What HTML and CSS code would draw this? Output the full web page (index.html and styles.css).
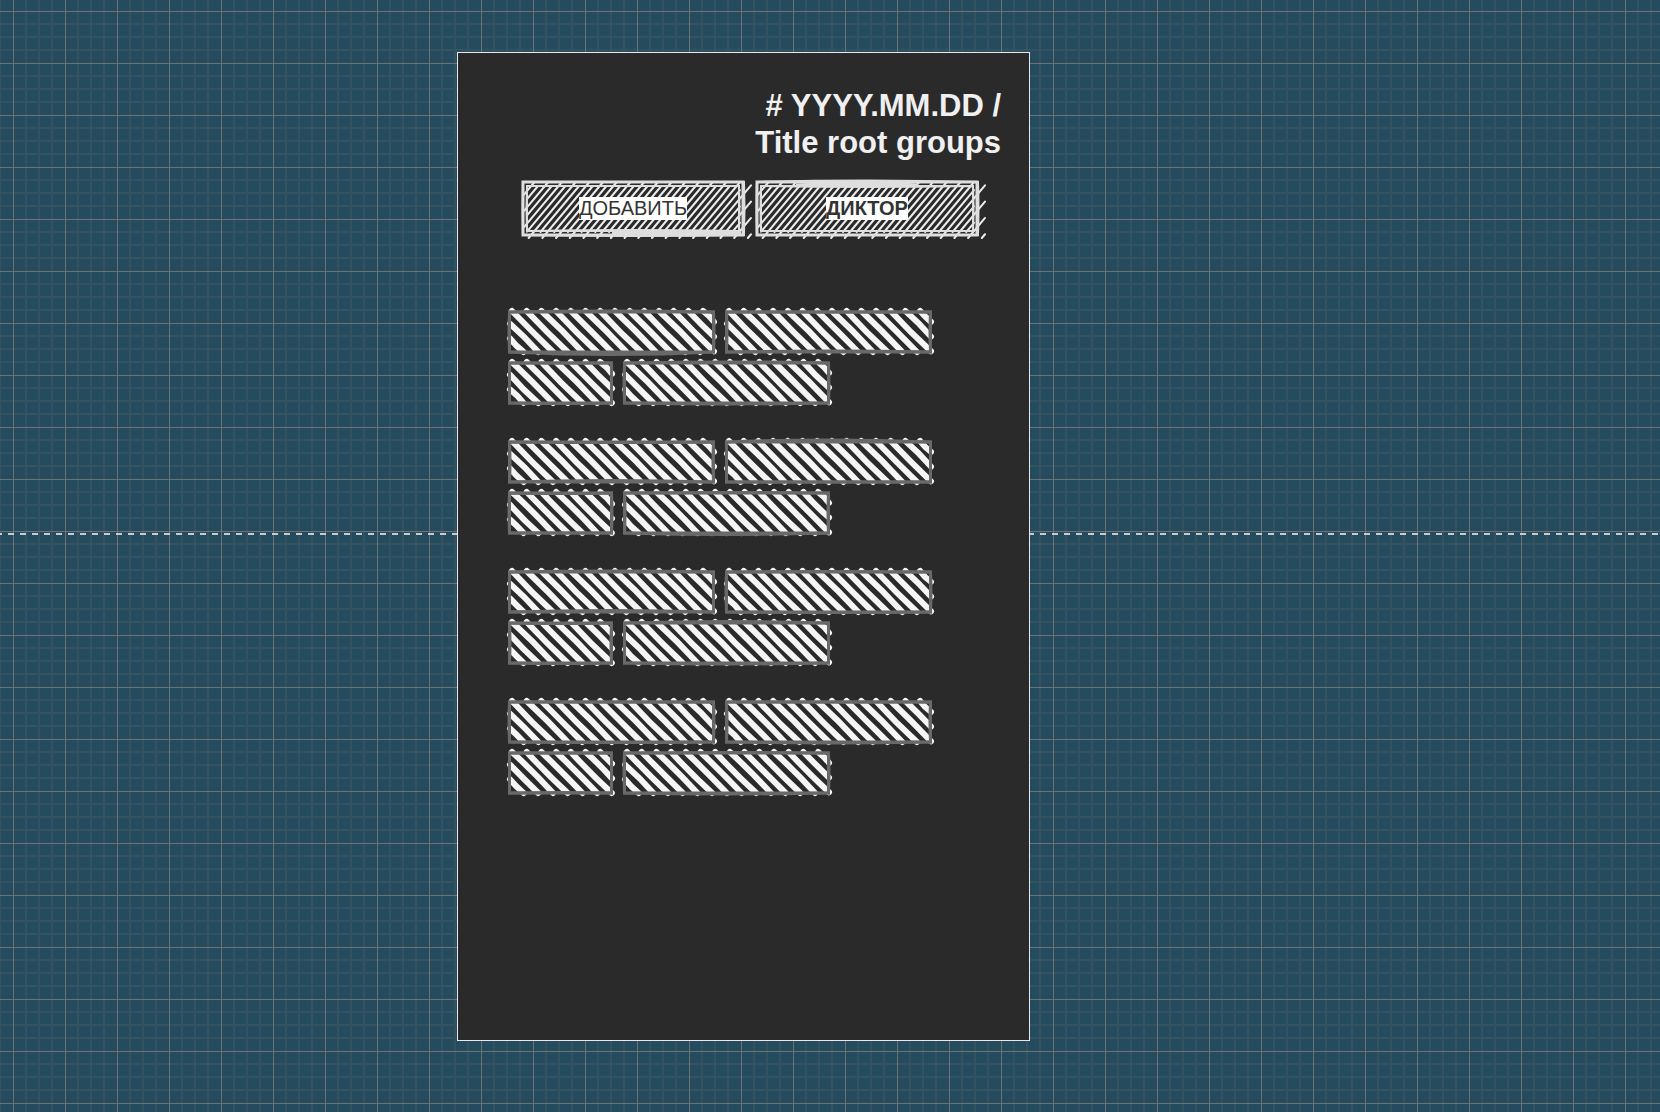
FILE: index.html
```html
<!DOCTYPE html>
<html lang="ru">
<head>
<meta charset="utf-8">
<meta name="viewport" content="width=device-width, initial-scale=1">
<title>Title root groups</title>
<link rel="stylesheet" href="styles.css">
</head>
<body>
<main class="board">
  <section class="screen">
    <h1 class="title"># YYYY.MM.DD /<br>Title root groups</h1>
    <div class="actions">
      <button class="action" type="button"><svg class="sketch" data-kind="button" data-bows="0,3" aria-hidden="true"></svg><span class="action-label">ДОБАВИТЬ</span></button>
      <button class="action action-strong" type="button"><svg class="sketch" data-kind="button" data-bows="-3,0" aria-hidden="true"></svg><span class="action-label">ДИКТОР</span></button>
    </div>
    <div class="groups">
      <div class="group">
        <svg class="sketch block" data-bows="-2,5"></svg>
        <svg class="sketch block" data-bows="0,-2"></svg>
        <svg class="sketch block block-short" data-bows="0,1"></svg>
        <svg class="sketch block" data-bows="-2,2"></svg>
      </div>
      <div class="group">
        <svg class="sketch block" data-bows="1,-3"></svg>
        <svg class="sketch block" data-bows="-4,0"></svg>
        <svg class="sketch block block-short" data-bows="1,0"></svg>
        <svg class="sketch block" data-bows="-1,3"></svg>
      </div>
      <div class="group">
        <svg class="sketch block" data-bows="-2,-3"></svg>
        <svg class="sketch block" data-bows="-1,1"></svg>
        <svg class="sketch block block-short" data-bows="1,1"></svg>
        <svg class="sketch block" data-bows="-3,2"></svg>
      </div>
      <div class="group">
        <svg class="sketch block" data-bows="0,1"></svg>
        <svg class="sketch block" data-bows="0,2"></svg>
        <svg class="sketch block block-short" data-bows="0,-1"></svg>
        <svg class="sketch block" data-bows="-1,2"></svg>
      </div>
    </div>
  </section>
</main>
<script src="sketch.js"></script>
</body>
</html>
```
FILE: styles.css
```css
* {
  box-sizing: border-box;
}

body {
  margin: 0;
  font-family: "Liberation Sans", Arial, sans-serif;
}

/* Guide line, major grid, then three minor lines per major cell */
.board {
  min-height: 100vh;
  padding: 52px 16px 71px 457px;
  background-color: #244b5e;
  background-image:
    linear-gradient(to right, #c8cccd 6px, transparent 6px),
    linear-gradient(to right, #6e7173 1px, transparent 1px),
    linear-gradient(to bottom, #6e7173 1px, transparent 1px),
    linear-gradient(to right, transparent 12px, #34525f 12px, #34525f 14px, transparent 14px, transparent 25px, #34525f 25px, #34525f 27px, transparent 27px, transparent 38px, #34525f 38px, #34525f 40px, transparent 40px),
    linear-gradient(to bottom, transparent 12px, #34525f 12px, #34525f 14px, transparent 14px, transparent 25px, #34525f 25px, #34525f 27px, transparent 27px, transparent 38px, #34525f 38px, #34525f 40px, transparent 40px);
  background-size: 12px 2px, 52px 52px, 52px 52px, 52px 52px, 52px 52px;
  background-position: 8px 533px, 13px 11px, 13px 11px, 13px 11px, 13px 11px;
  background-repeat: repeat-x, repeat, repeat, repeat, repeat;
}

.screen {
  max-width: 573px;
  min-height: calc(100vh - 123px);
  padding: 34px 28px;
  border: 1px solid #e6eaec;
  background: #2a2a2a;
}

.title {
  margin: 0;
  color: #f0f0f0;
  font-size: 31px;
  line-height: 37px;
  text-align: right;
}

.actions {
  display: flex;
  gap: 12px;
  margin: 20px 0 0 36px;
}

.action {
  display: grid;
  grid-template-rows: 55px;
  place-items: center;
  width: 222px;
  height: 55px;
  padding: 0;
  border: 0;
  background: none;
  color: #333;
  font: 20px/23px "Liberation Sans", Arial, sans-serif;
}

.action > * {
  grid-area: 1 / 1;
}

.action-strong {
  font-weight: 700;
}

.action-label {
  z-index: 1;
  background: #fff;
}

.sketch {
  display: block;
  width: 100%;
  height: 100%;
  overflow: visible;
  fill: none;
}

.groups {
  display: grid;
  gap: 38px;
  margin: 75px 0 0 23px;
}

.group {
  display: flex;
  flex-wrap: wrap;
  gap: 10px 12px;
}

.block {
  width: 205px;
  height: 41px;
}

.block-short {
  width: 103px;
}

.hatch {
  stroke: #f5f5f5;
  stroke-width: 6px;
  stroke-linecap: round;
}

.hatch-thin {
  stroke: #ececec;
  stroke-width: 2px;
  stroke-linecap: round;
}

.outline {
  stroke: #696969;
  stroke-width: 3px;
}

.outline-light {
  stroke: #dedede;
  stroke-width: 2px;
}

.outline-wide {
  stroke: #dedede;
  stroke-width: 3px;
}
```
FILE: sketch.js
```js
// Draws hand-sketched hatched rectangles into every .sketch element.
const NS = "http://www.w3.org/2000/svg";

function addPath(svg, d, className) {
  const path = document.createElementNS(NS, "path");
  path.setAttribute("d", d);
  path.setAttribute("class", className);
  svg.append(path);
}

// Parallel lines clipped to a box. slope is dy/dx; start is where a line
// crosses the top edge of the box, pitch the step along that edge.
function hatch(box, slope, start, pitch, seed) {
  const [l, t, r, b] = box;
  const reach = (b - t) / Math.abs(slope);
  let d = "";
  for (let k = -20; k < 40; k++) {
    const x0 = start + k * pitch;
    const dir = Math.sign(slope);
    const xa = Math.max(l, Math.min(x0, x0 + dir * reach));
    const xb = Math.min(r, Math.max(x0, x0 + dir * reach));
    if (xb - xa < 0) continue;
    const ya = t + (xa - x0) * slope;
    const yb = t + (xb - x0) * slope;
    const w = seed ? Math.sin(k * 2.3 + seed * 1.7) : 0;
    d += `M${xa} ${ya}Q${(xa + xb) / 2 + w} ${(ya + yb) / 2 - w} ${xb} ${yb}`;
  }
  return d;
}

function frame(l, t, r, b, top, bottom, side) {
  const mx = (l + r) / 2;
  const my = (t + b) / 2;
  return `M${l} ${t}Q${mx} ${t + top * 2} ${r} ${t}Q${r + side} ${my} ${r} ${b}` +
    `Q${mx} ${b + bottom * 2} ${l} ${b}Q${l - side} ${my} ${l} ${t}Z`;
}

document.querySelectorAll(".sketch").forEach((svg, i) => {
  const { width: w, height: h } = svg.getBoundingClientRect();
  const [top, bottom] = svg.dataset.bows.split(",").map(Number);
  if (svg.dataset.kind === "button") {
    addPath(svg, hatch([2, 1, w + 7, h + 2], -1.19, 12.6, 13.7, 0), "hatch-thin");
    addPath(svg, hatch([5, 5, w - 4, h - 4], -1.19, 16, 13.7, 0), "hatch-thin");
    addPath(svg, frame(1, 1, w - 1, h - 1, 0, 0, 0), "outline-wide");
    addPath(svg, frame(1, 1, w, h - 1, top / 2, bottom / 3, 1), "outline-light");
    addPath(svg, frame(5, 5, w - 5, h - 5, 0, 0, 0), "outline-light");
    addPath(svg, frame(5, 5, w - 5, h - 5, -top / 3, -bottom / 3, 1), "outline-light");
    if (top) addPath(svg, `M40 4Q${w / 2} 1 ${w - 60} 4`, "outline-wide");
    if (bottom) addPath(svg, `M90 ${h - 3}Q${w - 60} ${h - 2} ${w - 3} ${h - 3}`, "outline-wide");
  } else {
    addPath(svg, hatch([1, 0, w, h], 1, 3, 14.7, i), "hatch");
    addPath(svg, frame(0.5, 1, w - 0.5, h, 0, 0, 0), "outline");
    addPath(svg, frame(0.5, 1, w - 0.5, h, top / 2, bottom / 2, i % 3 - 1), "outline");
  }
});
```
